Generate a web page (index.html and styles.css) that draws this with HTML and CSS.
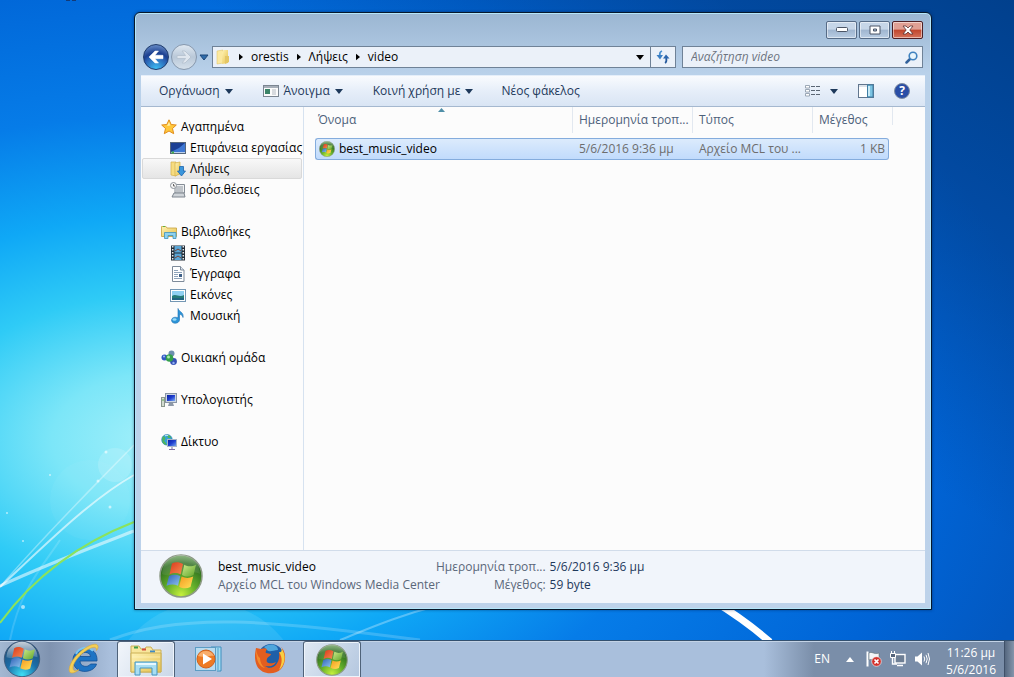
FILE: index.html
```html
<!DOCTYPE html>
<html lang="el">
<head>
  <meta charset="UTF-8">
  <meta name="viewport" content="width=device-width, initial-scale=1">
  <title>video</title>
  <link rel="stylesheet" href="styles.css">
</head>
<body>

<!-- shared icons -->
<svg class="sprite" aria-hidden="true">
  <defs>
    <radialGradient id="greenOrb" cx="50%" cy="95%" r="95%">
      <stop offset="0" stop-color="#c6f03c"/>
      <stop offset="0.4" stop-color="#62ad2a"/>
      <stop offset="0.8" stop-color="#2b6a1e"/>
      <stop offset="1" stop-color="#5f9a50"/>
    </radialGradient>
    <radialGradient id="blueOrb" cx="50%" cy="95%" r="90%">
      <stop offset="0" stop-color="#3fe0f5"/>
      <stop offset="0.5" stop-color="#1a6da8"/>
      <stop offset="1" stop-color="#234a70"/>
    </radialGradient>
    <linearGradient id="shine" x1="0" y1="0" x2="0" y2="1">
      <stop offset="0" stop-color="#fff" stop-opacity="0.75"/>
      <stop offset="1" stop-color="#fff" stop-opacity="0.15"/>
    </linearGradient>
    <linearGradient id="folder" x1="0" y1="0" x2="1" y2="1">
      <stop offset="0" stop-color="#fff3b4"/>
      <stop offset="1" stop-color="#e6c14e"/>
    </linearGradient>
    <linearGradient id="screen" x1="0" y1="0" x2="1" y2="1">
      <stop offset="0" stop-color="#0a1fa0"/>
      <stop offset="0.5" stop-color="#1f3fd0"/>
      <stop offset="1" stop-color="#7fb0f5"/>
    </linearGradient>
    <linearGradient id="redPane" x1="0" y1="0" x2="1" y2="1">
      <stop offset="0" stop-color="#d93a1c"/>
      <stop offset="1" stop-color="#f78a50"/>
    </linearGradient>
    <linearGradient id="greenPane" x1="0" y1="0" x2="1" y2="1">
      <stop offset="0" stop-color="#cdea8a"/>
      <stop offset="1" stop-color="#5fa52a"/>
    </linearGradient>
    <linearGradient id="bluePane" x1="0" y1="0" x2="1" y2="1">
      <stop offset="0" stop-color="#2f62b8"/>
      <stop offset="1" stop-color="#8ec3ee"/>
    </linearGradient>
    <linearGradient id="yellowPane" x1="0" y1="0" x2="1" y2="1">
      <stop offset="0" stop-color="#f59a20"/>
      <stop offset="1" stop-color="#ffe25a"/>
    </linearGradient>
    <symbol id="flag" viewBox="0 0 44 44">
      <path fill="url(#redPane)" d="M13 9.500C16.500 7.500 20.500 8 24 10L21.700 20.500C17.800 18.500 14.500 18.700 10.500 20.500Z"/>
      <path fill="url(#greenPane)" d="M25.300 10.800C29 13 33 12.800 37 10.700L34.500 21C30.500 23 27 23 23 21Z"/>
      <path fill="url(#bluePane)" d="M10 22C14 20.200 17.500 20.300 21.300 22L19 31.800C15.300 30 11.500 30 7.500 31.800Z"/>
      <path fill="url(#yellowPane)" d="M22.600 22.600C26.500 24.500 30 24.500 34.200 22.600L31.500 33C27.500 35 23.700 34.700 20.100 32.700Z"/>
    </symbol>
    <symbol id="mediaCenter" viewBox="0 0 44 44">
      <circle cx="22" cy="22" r="21" fill="url(#greenOrb)" stroke="#8d9a86" stroke-width="1.500"/>
      <path d="M3 20A19 19 0 0 1 41 20C32 15 14 25 3 20Z" fill="url(#shine)" opacity="0.4"/>
      <use href="#flag"/>
    </symbol>
    <symbol id="caret" viewBox="0 0 8 5">
      <path d="M0 0H8L4 5Z"/>
    </symbol>
    <symbol id="crumb" viewBox="0 0 5 8">
      <path d="M0 0V8L5 4Z"/>
    </symbol>
  </defs>
</svg>

<div class="desktop">
  <svg class="wallpaper" viewBox="0 0 1014 677" preserveAspectRatio="none" aria-hidden="true">
    <defs>
      <radialGradient id="glow" gradientUnits="userSpaceOnUse" cx="0" cy="0" r="1" gradientTransform="translate(160 440) scale(900 560)">
        <stop offset="0" stop-color="#a4f0fa"/>
        <stop offset="0.120" stop-color="#7ce6f8"/>
        <stop offset="0.260" stop-color="#2fcbf6"/>
        <stop offset="0.400" stop-color="#0fa8f6"/>
        <stop offset="0.580" stop-color="#067ce8"/>
        <stop offset="0.850" stop-color="#0064d6"/>
        <stop offset="1" stop-color="#0358c0"/>
      </radialGradient>
      <linearGradient id="dark" x1="0" y1="1" x2="1" y2="0">
        <stop offset="0.600" stop-color="#003a80" stop-opacity="0"/>
        <stop offset="1" stop-color="#003a80" stop-opacity="0.800"/>
      </linearGradient>
    </defs>
    <rect width="1014" height="677" fill="url(#glow)"/>
    <rect width="1014" height="677" fill="url(#dark)"/>
    <circle cx="115" cy="465" r="17" fill="#fff" opacity="0.150"/>
    <circle cx="90" cy="500" r="40" fill="#fff" opacity="0.040"/>
    <circle cx="206" cy="700" r="98" fill="#fff" opacity="0.090"/>
    <g fill="none" stroke="#fff">
      <path d="M0 587C40 540 90 490 134 445" stroke-width="1.500" opacity="0.350"/>
      <path d="M0 587C45 545 90 500 134 475" stroke-width="2" opacity="0.600"/>
      <path d="M0 586C45 565 90 548 134 531" stroke-width="3" opacity="0.550"/>
      <path d="M10 640C20 590 40 570 60 540" stroke-width="2" opacity="0.150"/>
      <path d="M110 640C180 612 270 620 420 640" stroke-width="3" opacity="0.180"/>
      <path d="M340 640C370 628 400 615 440 605" stroke-width="2" opacity="0.300"/>
      <path d="M712 600Q745 620 770 642" stroke-width="7"/>
    </g>
    <path d="M0 623C35 575 80 543 134 522" fill="none" stroke="#8be35c" stroke-width="2"/>
    <g fill="#fff" opacity="0.600">
      <circle cx="106" cy="452" r="1.500"/>
      <circle cx="98" cy="481" r="1.500"/>
      <circle cx="110" cy="507" r="1.500"/>
      <circle cx="50" cy="475" r="1"/>
      <circle cx="23" cy="541" r="1"/>
      <circle cx="23" cy="607" r="2"/>
      <circle cx="7" cy="513" r="1"/>
    </g>
    <path d="M66 0h4m2 0h4" stroke="#123a78" stroke-width="2"/>
  </svg>

  <main class="window">
    <div class="title-bar">
      <button class="caption" aria-label="Ελαχιστοποίηση">
        <svg width="12" height="6" viewBox="0 0 12 6"><rect x="0.500" y="0.500" width="11" height="4" rx="1" fill="#fff" stroke="#4b5566"/></svg>
      </button>
      <button class="caption" aria-label="Μεγιστοποίηση">
        <svg width="12" height="10" viewBox="0 0 12 10"><path d="M1 1H11V9H1ZM4.500 4V6H7.500V4Z" fill="#fff" fill-rule="evenodd" stroke="#4b5566"/></svg>
      </button>
      <button class="caption close" aria-label="Κλείσιμο">
        <svg width="12" height="10" viewBox="0 0 12 10"><path d="M1 1H4L6 3L8 1H11L7.800 5L11 9H8L6 7L4 9H1L4.200 5Z" fill="#fff" stroke="#5b3030" stroke-width="0.800"/></svg>
      </button>
    </div>

    <div class="nav-row">
      <div class="travel">
        <button class="round back" aria-label="Πίσω">
          <svg width="16" height="14" viewBox="0 0 16 14"><path d="M7 1L1 7L7 13H10.500L7 8.700H15V5.300H7L10.500 1Z" fill="#fff" stroke="#fff" stroke-width="0.500"/></svg>
        </button>
        <button class="round forward" aria-label="Εμπρός">
          <svg width="16" height="14" viewBox="0 0 16 14"><path d="M9 1L15 7L9 13H6L9.500 8.500H1V5.500H9.500L6 1Z" fill="#dfe6ee" stroke="#b9c5d2"/></svg>
        </button>
        <button class="recent" aria-label="Πρόσφατες σελίδες">
          <svg width="10" height="7" viewBox="0 0 10 7"><path d="M1 1H9L5 6Z" fill="#2f6cab" stroke="#1d4679"/></svg>
        </button>
      </div>
      <nav class="address" aria-label="Διεύθυνση">
        <svg class="icon" viewBox="0 0 16 16"><path d="M2 2L8 1V14L2 15Z" fill="#fbe9a0" stroke="#dcc060" stroke-width="0.500"/><path d="M7 3L9 1H13V14L7 15Z" fill="url(#folder)"/><path d="M10 7H14V13L10 15Z" fill="#e4c766"/></svg>
        <svg class="crumb"><use href="#crumb"/></svg>
        <a href="#">orestis</a>
        <svg class="crumb"><use href="#crumb"/></svg>
        <a href="#">Λήψεις</a>
        <svg class="crumb"><use href="#crumb"/></svg>
        <a href="#">video</a>
        <button class="address-menu" aria-label="Προηγούμενες θέσεις"><svg class="caret"><use href="#caret"/></svg></button>
        <button class="refresh" aria-label="Ανανέωση">
          <svg width="14" height="14" viewBox="0 0 14 14"><path d="M6 1C3.500 2 3.500 4 4 6" fill="none" stroke="#4a8fd0" stroke-width="1.800"/><path d="M0.500 5H7L4 9.500Z" fill="#3b7fc4"/><path d="M9 13C11 12 10.500 10 10.200 8" fill="none" stroke="#24589c" stroke-width="1.800"/><path d="M7 8.500L10 4.500L13.500 8.500Z" fill="#2b66ae"/></svg>
        </button>
      </nav>
      <div class="search">
        <input type="text" placeholder="Αναζήτηση video" aria-label="Αναζήτηση video">
        <svg width="13" height="13" viewBox="0 0 13 13"><path d="M5 8L1.500 11.500" stroke="#31619b" stroke-width="2.500" stroke-linecap="round"/><circle cx="8" cy="5" r="3.800" fill="#e8f5fc" stroke="#3f82bf" stroke-width="1.600"/></svg>
      </div>
    </div>

    <div class="toolbar">
      <button class="organize">Οργάνωση <svg class="caret"><use href="#caret"/></svg></button>
      <button class="open">
        <svg class="icon" viewBox="0 0 16 16"><rect x="0.500" y="2.500" width="15" height="11" fill="#fbfbfb" stroke="#7b8591"/><path d="M1 4H15" stroke="#a7afb9" stroke-width="2"/><rect x="2" y="6" width="5" height="5" fill="#3c8468"/><path d="M9 7H13M9 9H13M9 11H13" stroke="#b4bac2"/></svg>
        Άνοιγμα <svg class="caret"><use href="#caret"/></svg>
      </button>
      <button class="share">Κοινή χρήση με <svg class="caret"><use href="#caret"/></svg></button>
      <button class="new-folder">Νέος φάκελος</button>
      <div class="view-tools">
        <button aria-label="Αλλαγή προβολής">
          <svg class="icon" viewBox="0 0 16 16"><path d="M0.500 2.500H4.500V5H0.500ZM0.500 6.500H4.500V9H0.500ZM0.500 10.500H4.500V13H0.500Z" fill="#fff" stroke="#8794a5" stroke-width="0.800"/><path d="M6 3.500H10M11 3.500H15M6 7.500H10M11 7.500H15M6 11.500H10M11 11.500H15" stroke="#5b6674"/></svg>
          <svg class="caret"><use href="#caret"/></svg>
        </button>
        <button aria-label="Παράθυρο προεπισκόπησης">
          <svg class="icon" viewBox="0 0 16 16"><rect x="0.500" y="1.500" width="15" height="13" fill="#fff" stroke="#61768e"/><path d="M1 3H9" stroke="#b8c6d6"/><rect x="9.500" y="2" width="5.500" height="12" fill="#7dc4e2" stroke="#3f7ea5"/><path d="M11 3V13" stroke="#c8eaf6" stroke-width="2"/></svg>
        </button>
        <button aria-label="Βοήθεια"><span class="help">?</span></button>
      </div>
    </div>

    <div class="content">
      <nav class="tree" aria-label="Περιήγηση">
        <ul>
          <li><a href="#"><svg class="icon" viewBox="0 0 16 16"><path d="M8 0.800L10.200 5.500L15.300 6L11.500 9.500L12.700 14.700L8 12L3.300 14.700L4.500 9.500L0.700 6L5.800 5.500Z" fill="#ffc83c" stroke="#e08c1c"/><path d="M8 3L9.300 6.500L6 7Z" fill="#fff0a8"/></svg>Αγαπημένα</a></li>
          <li class="sub"><a href="#"><svg class="icon" viewBox="0 0 16 16"><rect x="0.500" y="2.500" width="15" height="11" fill="#3f78d4" stroke="#56677d"/><path d="M1 3H15L9 8L1 12Z" fill="#1b3f94"/><path d="M1 12.500H15" stroke="#bcd0ea"/><path d="M1.500 12.500H4" stroke="#47b04b" stroke-width="2"/></svg>Επιφάνεια εργασίας</a></li>
          <li class="sub"><a href="#" class="current"><svg class="icon" viewBox="0 0 16 16"><path d="M1 1H6V15L1 14Z" fill="#f6dc80" stroke="#d3b04a" stroke-width="0.700"/><path d="M5 2L10 1V13L5 15Z" fill="url(#folder)" stroke="#d3b04a" stroke-width="0.700"/><path d="M9.500 5.500H13.500V10H15.500L11.500 15L7.500 10H9.500Z" fill="#3a96dc" stroke="#1c65ad" stroke-width="0.800"/></svg>Λήψεις</a></li>
          <li class="sub"><a href="#"><svg class="icon" viewBox="0 0 16 16"><path d="M5 2.500H14.500V11H5Z" fill="#eef0f2" stroke="#858d96"/><path d="M6 5H13M6 7H13M6 9H13" stroke="#8e969f"/><path d="M4 11H14L15 15H2Z" fill="#cfd4d9" stroke="#7e868f"/><circle cx="3.500" cy="3.500" r="3" fill="#f6f6f6" stroke="#8d949b"/><path d="M3.500 2V4H5" fill="none" stroke="#666"/></svg>Πρόσ.θέσεις</a></li>
        </ul>
        <ul>
          <li><a href="#"><svg class="icon" viewBox="0 0 16 16"><path d="M0.500 2.500H5L6 4H15.500V12.500H0.500Z" fill="url(#folder)" stroke="#c8a13a" stroke-width="0.800"/><path d="M2 2.500H4" stroke="#57b347"/><path d="M3.500 14.500V8.500H15V14.500H12V11.500H7V14.500Z" fill="#8fd2ef" stroke="#3e93bf" stroke-width="0.800"/></svg>Βιβλιοθήκες</a></li>
          <li class="sub"><a href="#"><svg class="icon" viewBox="0 0 16 16"><rect x="1" y="0.500" width="14" height="15" fill="#222c36"/><path d="M2.700 1V15M13.300 1V15" stroke="#e4e9ee" stroke-width="1.500" stroke-dasharray="1.500 1.500"/><rect x="4.500" y="1" width="7" height="6.500" fill="#5aa6d6"/><rect x="4.500" y="8.500" width="7" height="6.500" fill="#5aa6d6"/><path d="M5 6L8 4L11 6M5 13L8 11L11 13" stroke="#7b4438" fill="none"/></svg>Βίντεο</a></li>
          <li class="sub"><a href="#"><svg class="icon" viewBox="0 0 16 16"><path d="M2.500 0.500H10.500L14 4V15.500H2.500Z" fill="#fff" stroke="#7e8b9a"/><path d="M10.500 0.500V4H14" fill="#dde5ee" stroke="#7e8b9a"/><path d="M4 4.500H8M4 6.500H12M4 8.500H8M4 10.500H8M4 12.500H12" stroke="#8ea3ba"/><rect x="9" y="8" width="3" height="3" fill="#3d5f87"/></svg>Έγγραφα</a></li>
          <li class="sub"><a href="#"><svg class="icon" viewBox="0 0 16 16"><rect x="0.500" y="2.500" width="15" height="12" fill="#fff" stroke="#7497b4"/><rect x="2" y="4" width="12" height="9" fill="#8fd0f2"/><path d="M2 9C6 6 9 11 14 8V13H2Z" fill="#257b78"/><path d="M2 12H14" stroke="#1c4f8c"/></svg>Εικόνες</a></li>
          <li class="sub"><a href="#"><svg class="icon" viewBox="0 0 16 16"><path d="M8 0.500C9 4 14 4 13 9.500C12.500 7 11 6.500 9.500 6.500V12C9 16 2 16.500 1.500 12.500C1.500 9.500 5 8.500 8 9.800Z" fill="#2d95d8" stroke="#1b6eb2" stroke-width="0.600"/><ellipse cx="4.500" cy="11.500" rx="2" ry="1.200" fill="#9bdcf7"/></svg>Μουσική</a></li>
        </ul>
        <ul>
          <li><a href="#"><svg class="icon" viewBox="0 0 16 16"><circle cx="3.500" cy="7.500" r="3" fill="#3158c4"/><circle cx="10.500" cy="3.500" r="3" fill="#6c8fae"/><circle cx="12.500" cy="11.500" r="3.400" fill="#3450b4"/><circle cx="8.500" cy="8" r="3.800" fill="#34a04c"/><circle cx="7.500" cy="7" r="1.500" fill="#a8ecac"/><circle cx="3" cy="6.500" r="1" fill="#a5bff5"/><circle cx="12.500" cy="13" r="1.200" fill="#93b2f0"/></svg>Οικιακή ομάδα</a></li>
        </ul>
        <ul>
          <li><a href="#"><svg class="icon" viewBox="0 0 16 16"><rect x="0.500" y="5.500" width="3" height="9" fill="#d3dbd0" stroke="#8b978d"/><path d="M1 8H3" stroke="#56a852"/><rect x="4.500" y="1.500" width="11" height="9" fill="#ccd6e2" stroke="#8995a6"/><rect x="6" y="3" width="8" height="6" fill="url(#screen)"/><path d="M8 11H12L13 14H7Z" fill="#8e99a8"/></svg>Υπολογιστής</a></li>
        </ul>
        <ul>
          <li><a href="#"><svg class="icon" viewBox="0 0 16 16"><circle cx="6" cy="5.800" r="5.300" fill="#35a2d6" stroke="#2275a8" stroke-width="0.600"/><path d="M2 2C5 3 5 5 3 7C5 8 5 10 6 11C2 11 0 7 2 2ZM6 1C9 1 10 3 10 4H7Z" fill="#4fb55b"/><path d="M4 2C5 1 7 1 7 2" stroke="#e2f7ff" fill="none"/><rect x="6.500" y="5.500" width="9" height="7" fill="url(#screen)" stroke="#a9b6c8"/><path d="M11 13V15M8 15.500H14" stroke="#7d6da5"/></svg>Δίκτυο</a></li>
        </ul>
      </nav>

      <section class="files">
        <table>
          <thead>
            <tr>
              <th class="col-name" scope="col">Όνομα<svg class="sort" viewBox="0 0 7 4"><path d="M0 4L3.500 0L7 4Z"/></svg></th>
              <th class="col-date" scope="col">Ημερομηνία τροπ...</th>
              <th class="col-type" scope="col">Τύπος</th>
              <th class="col-size" scope="col">Μέγεθος</th>
            </tr>
          </thead>
          <tbody>
            <tr>
              <td><span class="file"><svg class="icon"><use href="#mediaCenter"/></svg>best_music_video</span></td>
              <td>5/6/2016 9:36 μμ</td>
              <td>Αρχείο MCL του ...</td>
              <td>1 KB</td>
            </tr>
          </tbody>
        </table>
      </section>
    </div>

    <footer class="details">
      <svg class="preview"><use href="#mediaCenter"/></svg>
      <div class="summary">
        <div class="name">best_music_video</div>
        <div>Αρχείο MCL του Windows Media Center</div>
      </div>
      <dl>
        <dt>Ημερομηνία τροπ...</dt>
        <dd>5/6/2016 9:36 μμ</dd>
        <dt>Μέγεθος:</dt>
        <dd>59 byte</dd>
      </dl>
    </footer>
  </main>

  <div class="taskbar">
    <button class="start" aria-label="Έναρξη">
      <svg width="38" height="38" viewBox="0 0 44 44"><circle cx="22" cy="22" r="20.500" fill="url(#blueOrb)" stroke="#3c5878"/><path d="M4 20A18 18 0 0 1 40 20C30 16 14 24 4 20Z" fill="url(#shine)"/><use href="#flag"/></svg>
    </button>
    <button class="task" aria-label="Internet Explorer">
      <svg width="34" height="34" viewBox="0 0 34 34">
        <path fill-rule="evenodd" fill="#1f74c4" stroke="#124f96" stroke-width="0.800" d="M30 19H13C13 25 21 26 23.500 22H29.500C27 32 6 33 6 18C6 4 31 1 30 19ZM13 14.500H23.500C23 9 13.500 9 13 14.500Z"/>
        <path d="M9 12C12 5 22 4 26 9" fill="none" stroke="#7cc7f2" stroke-width="2"/>
        <path d="M5 31C-1 31 3 19 12 11C20 3 30 0 31 4C31.500 6 30 8 29.500 8.500C30 5 27 4 21 7.500C11 13 3 25 7 28.500C8 29.500 11 28 12 27.500C10 29.500 7 31 5 31Z" fill="#f4cf56" stroke="#d7a636" stroke-width="0.600"/>
      </svg>
    </button>
    <button class="task active" aria-label="Εξερεύνηση των Windows">
      <svg width="34" height="34" viewBox="0 0 34 34">
        <path d="M2 7V3H10L12 6H16L17 4H22L24 7H32V29H2Z" fill="#f8e69c" stroke="#cbb056"/>
        <path d="M5 4.500H9" stroke="#3f9f48" stroke-width="2"/><path d="M13 6.500H17" stroke="#d64e3e" stroke-width="2"/><path d="M21 8.500H26" stroke="#3f8bc4" stroke-width="2"/>
        <path d="M2 10H32V29H2Z" fill="url(#folder)" stroke="#cbb056"/>
        <path d="M3 14H31M3 18H31" stroke="#fff6c8" opacity="0.600"/>
        <path d="M6 32V19H28V32H23V25H11V32Z" fill="#a9def2" stroke="#4596c4"/>
        <path d="M7 21H27" stroke="#e6f8ff" stroke-width="2"/>
      </svg>
    </button>
    <button class="task" aria-label="Windows Media Player">
      <svg width="34" height="34" viewBox="0 0 34 34">
        <path d="M20 5H30V29H26" fill="#a6dcf2" stroke="#3f8fbe"/><path d="M27 6V28M24 5V29" stroke="#4f9fca"/>
        <rect x="4.500" y="5.500" width="20" height="23" fill="#b9dcf0" stroke="#5c9cc4"/>
        <circle cx="15" cy="17" r="9" fill="#ee7a22" stroke="#d1601a"/>
        <path d="M7 14A9 9 0 0 1 23 14C18 13 13 16 7 14Z" fill="#f9ae6c"/>
        <path d="M12 11.500V22.500L21 17Z" fill="#fff"/>
      </svg>
    </button>
    <button class="task" aria-label="Firefox">
      <svg width="34" height="34" viewBox="0 0 34 34">
        <circle cx="18" cy="15" r="13" fill="#1f5fa8"/>
        <path d="M11 5C18 0 25 3 25 8C20 8 17 11 14 8Z" fill="#4fa6dc"/>
        <path d="M3 6C5 6 6 7 8 7C10 6 12 6 14 7C13 9 12 10 13 11L18 12C18 14 14 15 14 17C12 22 19 22 23 20C20 26 12 24 12 24C18 29 28 23 26 10C30 12 30 5 28 5C33 9 34 20 28 27C21 34 8 32 4 24C1 17 2 11 3 6Z" fill="#e35e20"/>
        <path d="M28 6C34 13 32 23 26 28C29 22 30 16 26 10C29 11 29 8 28 6Z" fill="#f8cf42"/>
        <path d="M3 7C4 12 5 15 7 16C7 20 9 24 12 26C7 25 3 20 3 7Z" fill="#f58b2c"/>
      </svg>
    </button>
    <button class="task active running" aria-label="Windows Media Center">
      <svg width="32" height="32"><use href="#mediaCenter"/></svg>
    </button>

    <div class="tray">
      <button class="lang">EN</button>
      <button class="more" aria-label="Εμφάνιση κρυφών εικονιδίων"><svg width="8" height="5" viewBox="0 0 8 5"><path d="M0 5L4 0L8 5Z" fill="#fff"/></svg></button>
      <button aria-label="Κέντρο ενεργειών">
        <svg class="icon" viewBox="0 0 16 16"><path d="M1.500 0.500V15.500" stroke="#fff" stroke-width="2"/><path d="M3 2C6 0 8 4 13 2V9C9 11 6 7 3 9Z" fill="#f3f5f8" stroke="#566" stroke-width="0.500"/><circle cx="10.500" cy="10.500" r="4.800" fill="#d3312b" stroke="#fff" stroke-width="0.600"/><path d="M8.500 8.500L12.500 12.500M12.500 8.500L8.500 12.500" stroke="#fff" stroke-width="1.700"/></svg>
      </button>
      <button aria-label="Δίκτυο">
        <svg class="icon" viewBox="0 0 16 16"><rect x="5" y="3.500" width="10" height="8.500" fill="#6e7f95" stroke="#fff" stroke-width="1.400"/><path d="M7 14.500H13M2.500 7V13H7" stroke="#fff" stroke-width="1.400" fill="none"/><path d="M0.500 2.500H5.500V6.500H0.500ZM1.500 0V3M4.500 0V3" fill="#55657c" stroke="#fff"/></svg>
      </button>
      <button aria-label="Ένταση ήχου">
        <svg class="icon" viewBox="0 0 16 16"><path d="M1 5.500H3.500L8 1.500V14.500L3.500 10.500H1Z" fill="#fff"/><path d="M10 5.500Q11.500 8 10 10.500M12 3.800Q14.500 8 12 12.200M14 2Q17 8 14 14" fill="none" stroke="#fff"/></svg>
      </button>
      <button class="clock">11:26 μμ<br>5/6/2016</button>
      <button class="show-desktop" aria-label="Εμφάνιση επιφάνειας εργασίας"></button>
    </div>
  </div>
</div>

</body>
</html>
```
FILE: styles.css
```css
* {
  box-sizing: border-box;
}

body {
  margin: 0;
  font-family: "Open Sans", "Noto Sans", sans-serif;
  font-size: 12px;
  line-height: 18px;
  color: #000;
}

button {
  display: flex;
  align-items: center;
  padding: 0;
  border: none;
  background: none;
  font: inherit;
  color: inherit;
  white-space: nowrap;
}

a {
  color: inherit;
  text-decoration: none;
}

svg {
  flex: none;
  display: block;
}

.sprite {
  position: absolute;
  width: 0;
  height: 0;
}

.icon {
  width: 16px;
  height: 16px;
}

.caret {
  width: 8px;
  height: 5px;
  fill: currentColor;
}

.desktop {
  position: relative;
  display: flex;
  flex-direction: column;
  min-height: 100vh;
  overflow: hidden;
}

.wallpaper {
  position: absolute;
  width: 100%;
  height: 100%;
}

/* window */
.window {
  position: relative;
  flex: 1;
  display: flex;
  flex-direction: column;
  margin: 12px 82px 30px 134px;
  padding: 0 6px 6px;
  border: 1px solid #07182c;
  border-radius: 6px 6px 0 0;
  background: linear-gradient(#9bb6d2, #b9d1ea 60px, #bdd2ea);
  box-shadow: inset 0 0 0 1px #b4e6fa, 0 0 3px rgba(0, 20, 60, 0.5);
}

.title-bar {
  display: flex;
  justify-content: flex-end;
  gap: 2px;
  padding: 8px 2px 5px;
}

.caption {
  justify-content: center;
  width: 31px;
  height: 18px;
  border: 1px solid #566b86;
  border-radius: 2px;
  background: linear-gradient(#c6d6e8 45%, #9fb5cf 50%, #b9cde3);
  box-shadow: inset 0 0 0 1px rgba(255, 255, 255, 0.5);
}

.close {
  border-color: #4d1f24;
  background: linear-gradient(#e0a094 45%, #c0452c 50%, #d4735c);
}

.nav-row {
  display: flex;
  align-items: center;
  height: 31px;
  padding: 0 2px 5px;
}

.travel {
  display: flex;
  align-items: center;
  gap: 2px;
  width: 69px;
}

.round {
  justify-content: center;
  width: 26px;
  height: 26px;
  border-radius: 50%;
}

.back {
  border: 1px solid #1d3a6b;
  background: radial-gradient(circle at 50% 100%, #3fc0f5, #2a62b4 45%, #1b3f90 60%, #7ea4d8);
}

.forward {
  border: 1px solid #8798ad;
  background: linear-gradient(#dfe8f1, #b9c8d8 50%, #d5e0ea);
}

.address {
  flex: 1;
  display: flex;
  align-items: center;
  height: 22px;
  padding-left: 2px;
  border: 1px solid #6f8297;
  background: #ebf1f9;
}

.address .crumb {
  width: 4px;
  height: 8px;
  margin: 0 8px;
}

.address-menu {
  margin-left: auto;
  padding: 0 6px;
}

.refresh {
  justify-content: center;
  align-self: stretch;
  width: 25px;
  border-left: 1px solid #6f8297;
}

.search {
  flex: 0 1 241px;
  display: flex;
  align-items: center;
  height: 22px;
  margin-left: 6px;
  padding: 0 4px 0 8px;
  border: 1px solid #6f8297;
  background: #ebf1f9;
}

.search input {
  flex: 1;
  min-width: 0;
  padding: 0;
  border: none;
  background: none;
  font: inherit;
}

.search input::placeholder {
  color: #6d7480;
  font-style: italic;
}

.toolbar {
  display: flex;
  align-items: center;
  height: 32px;
  padding: 0 15px 0 18px;
  border-top: 1px solid #e4eefa;
  border-bottom: 1px solid #a5b8cf;
  background: linear-gradient(#f9fbfe, #e6eef9 50%, #d9e5f4);
  color: #1e395b;
}

.toolbar button {
  gap: 5px;
}

.toolbar .open,
.toolbar .share {
  margin-left: 30px;
}

.toolbar .new-folder {
  margin-left: 28px;
}

.view-tools {
  display: flex;
  align-items: center;
  margin-left: auto;
  gap: 20px;
}

.view-tools button {
  gap: 9px;
}

.help {
  width: 16px;
  height: 16px;
  border: 1px solid #7f8da3;
  border-radius: 50%;
  background: #2a4ea6;
  color: #fff;
  font-weight: bold;
  line-height: 14px;
  text-align: center;
}

.content {
  flex: 1;
  display: flex;
  background: #fcfcfc;
}

/* folder tree */
.tree {
  width: 163px;
  padding: 9px 1px;
  border-right: 1px solid #d6e2f0;
}

.tree ul {
  margin: 0 0 21px;
  padding: 0;
  list-style: none;
}

.tree a {
  display: flex;
  align-items: center;
  gap: 4px;
  height: 21px;
  padding-left: 18px;
  border: 1px solid transparent;
  border-radius: 2px;
  white-space: nowrap;
}

.tree .sub a {
  padding-left: 27px;
}

.tree .current {
  border-color: #d9d9d9;
  background: linear-gradient(#f8f8f8, #e5e5e5);
}

/* file list */
.files {
  flex: 1;
  padding: 0 36px 0 11px;
}

table {
  width: 100%;
  table-layout: fixed;
  border-spacing: 0;
}

th {
  position: relative;
  height: 26px;
  padding: 0 0 0 6px;
  border-left: 1px solid #e2e8f0;
  color: #4c607a;
  font-weight: normal;
  text-align: left;
  white-space: nowrap;
}

th.col-name {
  padding-left: 3px;
  border-left: none;
}

.col-date,
.col-type {
  width: 120px;
}

.col-size {
  width: 77px;
}

.col-size::after {
  content: "";
  position: absolute;
  top: 0;
  right: -4px;
  height: 18px;
  border-right: 1px solid #e2e8f0;
}

.sort {
  position: absolute;
  top: 1px;
  left: 48%;
  width: 7px;
  height: 4px;
  fill: #4f8fa8;
}

tbody::before {
  content: "";
  display: block;
  height: 5px;
}

td {
  height: 22px;
  padding: 0 3px 0 7px;
  border: 1px solid #84acdd;
  border-width: 1px 0;
  background: linear-gradient(#dcebfc, #c1dbfc);
  color: #6d6d6d;
  white-space: nowrap;
}

td:first-child {
  padding-left: 3px;
  border-left-width: 1px;
  border-radius: 3px 0 0 3px;
  color: #000;
}

td:last-child {
  border-right-width: 1px;
  border-radius: 0 3px 3px 0;
  text-align: right;
}

.file {
  display: flex;
  align-items: center;
  gap: 4px;
}

/* details pane */
.details {
  display: flex;
  align-items: center;
  height: 53px;
  padding: 0 0 3px 18px;
  border-top: 1px solid #d1dcea;
  background: #f1f5fb;
  color: #5a6779;
}

.preview {
  width: 44px;
  height: 44px;
}

.summary {
  width: 218px;
  margin-left: 15px;
  white-space: nowrap;
}

.details .name {
  color: #000;
}

.details dl {
  display: grid;
  grid-template-columns: auto auto;
  column-gap: 4px;
  margin: 0;
  white-space: nowrap;
}

.details dt {
  text-align: right;
}

.details dd {
  margin: 0;
  color: #1e395b;
}

/* taskbar */
.taskbar {
  position: relative;
  display: flex;
  align-items: stretch;
  gap: 4px;
  height: 37px;
  border-top: 1px solid #33506f;
  background: linear-gradient(90deg, #a3b8d2, #7f93b0 50px, #a9bfdc 110px, #a9bfdc calc(100% - 250px), #7a8ea9 calc(100% - 200px), #7a8ea9);
  box-shadow: inset 0 1px 0 #c3d3e6;
}

.start {
  justify-content: center;
  width: 44px;
  margin-right: 7px;
}

.task {
  justify-content: center;
  width: 58px;
}

.task.active {
  border: 1px solid #4f6279;
  border-bottom: none;
  border-radius: 3px 3px 0 0;
  background: linear-gradient(120deg, #f2f6fb, #cad7e8);
  box-shadow: inset 0 0 0 1px #eef4fb;
}

.task.running {
  background: linear-gradient(120deg, #dfe8f3, #b4c7df);
}

.tray {
  display: flex;
  align-items: center;
  gap: 8px;
  margin-left: auto;
  color: #fff;
}

.lang {
  margin-right: 8px;
}

.tray .more {
  margin-right: 4px;
}

.tray .clock {
  display: block;
  margin-left: 8px;
  padding-top: 4px;
  line-height: 17px;
  text-align: center;
}

.show-desktop {
  align-self: stretch;
  width: 10px;
  border-left: 1px solid #3f5068;
  background: linear-gradient(90deg, #55677f, #8495ab);
}
```
